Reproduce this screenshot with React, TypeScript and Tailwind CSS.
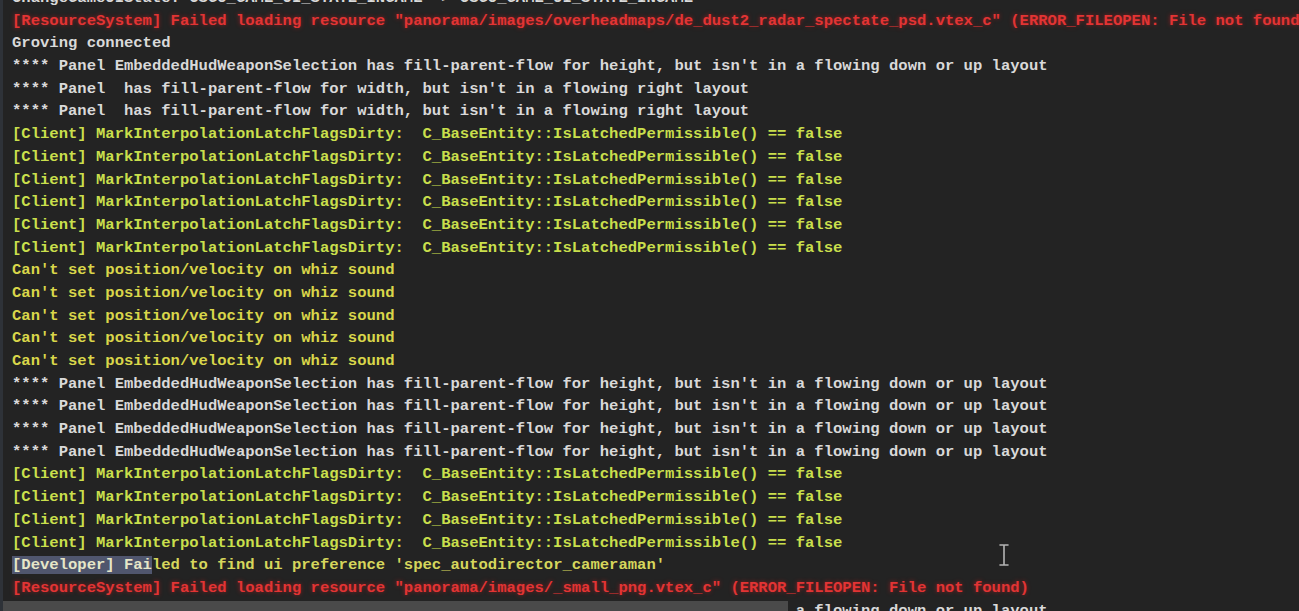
type Tone = "white" | "red" | "client" | "sound" | "dev";

type LogLine = {
    text: string
    tone: Tone
}

const panelHeight = "**** Panel EmbeddedHudWeaponSelection has fill-parent-flow for height, but isn't in a flowing down or up layout";
const panelWidth = "**** Panel  has fill-parent-flow for width, but isn't in a flowing right layout";
const client = "[Client] MarkInterpolationLatchFlagsDirty:  C_BaseEntity::IsLatchedPermissible() == false";
const whiz = "Can't set position/velocity on whiz sound";

const lines: LogLine[] = [
    { text: "ChangeGameUIState: CSGO_GAME_UI_STATE_INGAME -> CSGO_GAME_UI_STATE_INGAME", tone: "white" },
    { text: "[ResourceSystem] Failed loading resource \"panorama/images/overheadmaps/de_dust2_radar_spectate_psd.vtex_c\" (ERROR_FILEOPEN: File not found)", tone: "red" },
    { text: "Groving connected", tone: "white" },
    { text: panelHeight, tone: "white" },
    { text: panelWidth, tone: "white" },
    { text: panelWidth, tone: "white" },
    ...Array.from({ length: 6 }, () => ({ text: client, tone: "client" as Tone })),
    ...Array.from({ length: 5 }, () => ({ text: whiz, tone: "sound" as Tone })),
    ...Array.from({ length: 4 }, () => ({ text: panelHeight, tone: "white" as Tone })),
    ...Array.from({ length: 4 }, () => ({ text: client, tone: "client" as Tone })),
];

const toneClass: Record<Tone, string> = {
    white: "text-[#d9d9d9]",
    red: "text-[#e23434] [text-shadow:0_0_4px_rgba(220,30,30,0.6)]",
    client: "text-[#c9df4c]",
    sound: "text-[#d9d64a]",
    dev: "text-[#d6d65c]",
};

const App = () => {
    return (
        <div className="w-[1299px] h-[611px] overflow-hidden bg-[#232323] border-l-[3px] border-[#2e3238] relative"
            style={{ fontFamily: '"Liberation Mono", "DejaVu Sans Mono", monospace' }}>
            <div className="flex flex-col mt-[-13px] pl-[9px] text-[15.56px] leading-[22.68px] font-bold whitespace-pre">
                {lines.map((line, index) => (
                    <div key={index} className={toneClass[line.tone]}>{line.text}</div>
                ))}
                <div className={toneClass.dev}>
                    <span className="bg-[#50566e] text-[#e6e6c8]">[Developer] Fai</span>led to find ui preference 'spec_autodirector_cameraman'
                </div>
                <div className={toneClass.red}>
                    [ResourceSystem] Failed loading resource "panorama/images/_small_png.vtex_c" (ERROR_FILEOPEN: File not found)
                </div>
                <div className="relative text-[#d9d9d9]">
                    {panelHeight}
                    <div className="absolute left-[-12px] top-[1px] w-[788px] h-[30px] bg-[#4a4a4a]" />
                </div>
            </div>

            {/* text cursor */}
            <svg className="absolute left-[994px] top-[543px]" width="14" height="24" viewBox="0 0 14 24" fill="none">
                <path d="M3 2h3.5M7.5 2H11M7 2.5v19M3 22h3.5M7.5 22H11" stroke="#b5b5b5" strokeWidth="1.6" strokeLinecap="round" />
            </svg>
        </div>
    )
}

export default App;
